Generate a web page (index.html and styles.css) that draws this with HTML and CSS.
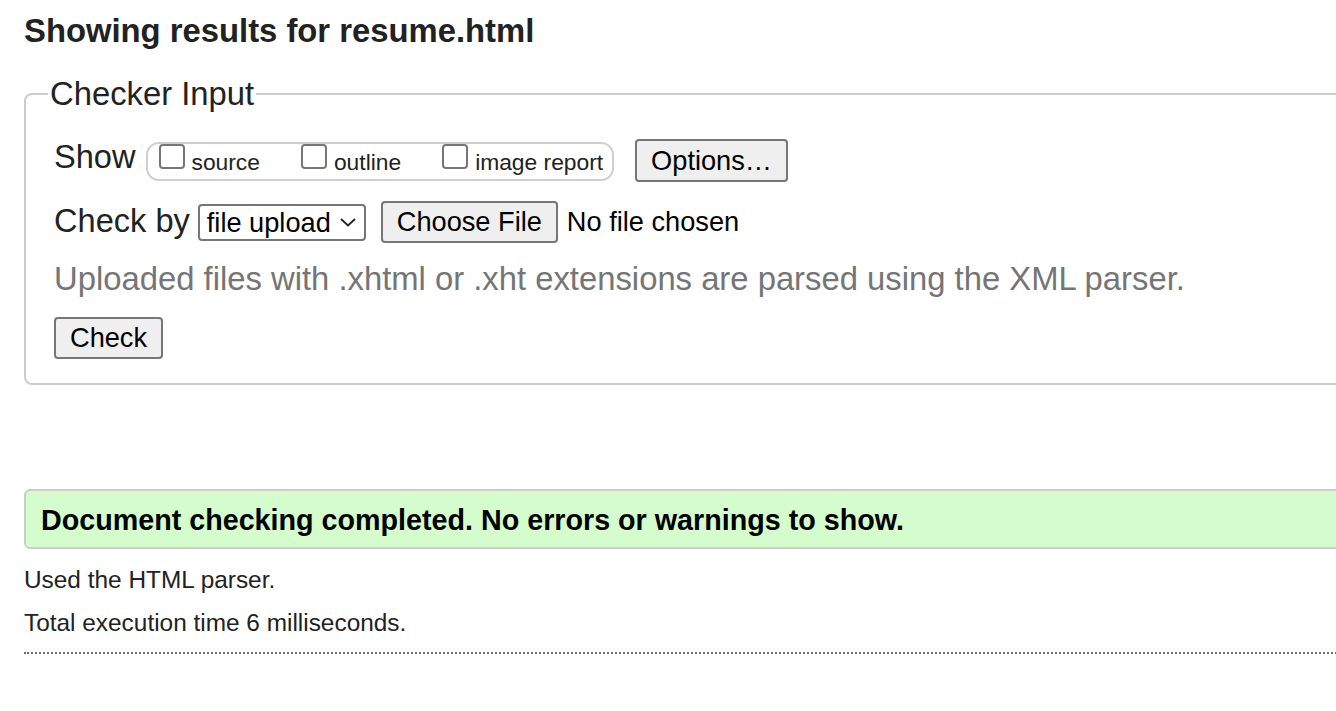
FILE: index.html
```html
<!DOCTYPE html>
<html lang="en">
<head>
<meta charset="utf-8">
<title>Showing results for resume.html - Nu Html Checker</title>
<link rel="stylesheet" href="styles.css">
</head>
<body>
<div class="page">
  <h1 class="title">Showing results for resume.html</h1>
  <form class="checker">
    <fieldset class="input-box">
      <legend class="input-legend">Checker Input</legend>
      <div class="fs-body">
        <div class="row row-show">
          <span class="label">Show</span>
          <div class="pill">
            <label class="opt"><input type="checkbox" class="cb"><span class="opt-text">source</span></label>
            <label class="opt"><input type="checkbox" class="cb"><span class="opt-text">outline</span></label>
            <label class="opt"><input type="checkbox" class="cb"><span class="opt-text">image report</span></label>
          </div>
          <button type="button" class="btn btn-options">Options…</button>
        </div>
        <div class="row row-by">
          <span class="label label-by">Check by</span>
          <div class="select">
            <span class="select-text">file upload</span>
            <svg class="chev" width="16" height="9" viewBox="0 0 16 9"><path d="M1 1 L8 7.5 L15 1" fill="none" stroke="#222" stroke-width="1.8"/></svg>
          </div>
          <button type="button" class="btn btn-file">Choose File</button>
          <span class="file-name">No file chosen</span>
        </div>
        <p class="hint">Uploaded files with .xhtml or .xht extensions are parsed using the XML parser.</p>
        <button type="button" class="btn btn-check">Check</button>
      </div>
    </fieldset>
  </form>
  <div class="success">Document checking completed. No errors or warnings to show.</div>
  <p class="info info-first">Used the HTML parser.</p>
  <p class="info">Total execution time 6 milliseconds.</p>
  <div class="rule"></div>
</div>
</body>
</html>
```
FILE: styles.css
```css
html {
  overflow: hidden;
}
body {
  margin: 0;
  padding-left: 24px;
  font-family: "Liberation Sans", Arial, sans-serif;
  color: #222;
  background: #fff;
}
.page {
  width: 1340px;
}
.title {
  margin: 12px 0 0;
  font-size: 32.8px;
  line-height: 38px;
  font-weight: bold;
  color: #222;
}
.checker {
  margin: 0;
}
.input-box {
  margin: 25px 0 0;
  padding: 26px 22px 24px 22px;
  border: 2px solid #ccc;
  border-radius: 8px;
  min-width: 0;
}
.input-legend {
  padding: 0 2px 0 2px;
  font-size: 32.8px;
  line-height: 38px;
  color: #222;
}
.fs-body {
  padding-left: 6px;
}
.row {
  display: flex;
  align-items: flex-start;
}
.label {
  font-size: 32.6px;
  line-height: 36px;
  color: #222;
  white-space: nowrap;
}
.pill {
  display: flex;
  align-items: flex-start;
  box-sizing: border-box;
  height: 39px;
  margin: 3px 0 0 10px;
  padding: 0 9px 0 11px;
  border: 2px solid #cfcfcf;
  border-radius: 13px;
  gap: 41px;
}
.opt {
  display: flex;
  align-items: flex-start;
}
.cb {
  appearance: none;
  -webkit-appearance: none;
  box-sizing: border-box;
  width: 26px;
  height: 25px;
  margin: 0;
  border: 2px solid #767676;
  border-radius: 4px;
  background: #fff;
}
.opt-text {
  margin-left: 7px;
  font-size: 22.8px;
  line-height: 36px;
  color: #222;
  white-space: nowrap;
}
.btn {
  box-sizing: border-box;
  margin: 0;
  padding: 0 14px;
  font-family: "Liberation Sans", Arial, sans-serif;
  font-size: 27.2px;
  color: #000;
  background: #efefef;
  border: 2px solid #767676;
  border-radius: 4px;
  white-space: nowrap;
}
.btn-options {
  margin-left: 21px;
  height: 43px;
  line-height: 39px;
}
.row-by {
  margin-top: 19px;
}
.label-by {
  margin-top: 2px;
}
.select {
  display: flex;
  align-items: center;
  box-sizing: border-box;
  height: 37px;
  margin: 3px 0 0 8px;
  padding: 0 8px 0 7px;
  border: 2px solid #767676;
  border-radius: 4px;
  background: #fff;
  gap: 9px;
}
.select-text {
  font-size: 27.2px;
  line-height: 33px;
  color: #000;
  white-space: nowrap;
}
.chev {
  display: block;
}
.btn-file {
  margin-left: 15px;
  height: 42px;
  line-height: 38px;
}
.file-name {
  margin-left: 9px;
  font-size: 27.2px;
  line-height: 42px;
  color: #000;
  white-space: nowrap;
}
.hint {
  margin: 18px 0 0;
  font-size: 32.8px;
  line-height: 36px;
  color: #757575;
  white-space: nowrap;
}
.btn-check {
  display: block;
  margin-top: 20px;
  height: 42px;
  line-height: 38px;
}
.success {
  margin-top: 104px;
  box-sizing: border-box;
  height: 60px;
  padding: 2px 0 0 15px;
  font-size: 28.7px;
  line-height: 54px;
  font-weight: bold;
  color: #000;
  background: #d4fccc;
  border: 2px solid #ccc;
  border-radius: 6px;
  white-space: nowrap;
}
.info {
  margin: 15px 0 0;
  font-size: 24.4px;
  line-height: 28px;
  color: #222;
}
.info-first {
  margin-top: 17px;
}
.rule {
  margin-top: 15px;
  border-top: 2px dotted #6f6f6f;
}
```
